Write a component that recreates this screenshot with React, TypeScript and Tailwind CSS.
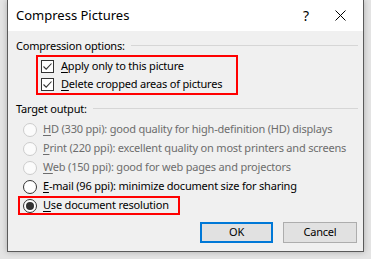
import type { ReactNode } from "react";

const font = { fontFamily: '"Noto Sans", "Open Sans", sans-serif' };

function Acc({ children }: { children: ReactNode }) {
  return <span className="underline underline-offset-2">{children}</span>;
}

function SectionHeader({ label }: { label: string }) {
  return (
    <div className="flex h-[16px] items-center gap-[6px]">
      <span className="leading-none">{label}</span>
      <div className="h-px flex-1 bg-[#d6d6d6]" />
    </div>
  );
}

function CheckBox() {
  return (
    <span className="flex h-[13px] w-[13px] shrink-0 items-center justify-center border border-[#333] bg-white">
      <svg width="11" height="11" viewBox="0 0 11 11">
        <path d="M1.5 5.5 L4.2 8.2 L9.5 2.5" fill="none" stroke="#333" strokeWidth="1.1" />
      </svg>
    </span>
  );
}

function Radio({ checked, disabled }: { checked?: boolean; disabled?: boolean }) {
  return (
    <span
      className={
        disabled
          ? "flex h-[14px] w-[14px] shrink-0 items-center justify-center rounded-full border border-[#cccccc] bg-[#fbfbfb]"
          : "flex h-[14px] w-[14px] shrink-0 items-center justify-center rounded-full border border-[#333] bg-white"
      }
    >
      {checked && <span className="h-[8px] w-[8px] rounded-full bg-[#333]" />}
    </span>
  );
}

function RadioRow({
  children,
  checked,
  disabled,
}: {
  children: ReactNode;
  checked?: boolean;
  disabled?: boolean;
}) {
  return (
    <div className="ml-[7px] flex h-[19px] items-center gap-[6px]">
      <Radio checked={checked} disabled={disabled} />
      <span className={disabled ? "text-[#6d6d6d]" : "text-black"}>{children}</span>
    </div>
  );
}

export default function App() {
  return (
    <div
      className="flex h-[259px] w-[371px] whitespace-nowrap bg-[#e4e4e4] px-[7px] pb-[7px] text-[11px] tracking-[-0.2px] text-black"
      style={font}
    >
      <div className="flex flex-1 flex-col border-x border-b border-[#5a5a5a] bg-[#f0f0f0] shadow-[0_0_6px_rgba(0,0,0,0.25)]">
        <div className="flex h-[31px] shrink-0 items-center bg-white pl-[8px]">
          <span className="text-[13px] leading-none tracking-normal">Compress Pictures</span>
          <span className="ml-auto mr-[26px] text-[14px] leading-none">?</span>
          <svg className="mr-[17px]" width="11" height="11" viewBox="0 0 11 11">
            <path d="M0.5 0.5 L10.5 10.5 M10.5 0.5 L0.5 10.5" stroke="#000" strokeWidth="1" />
          </svg>
        </div>

        <div className="flex flex-1 flex-col pl-[8px] pr-[5px]">
          <div className="mt-[6px]">
            <SectionHeader label="Compression options:" />
          </div>
          <div className="ml-[20px] mt-[2px] flex h-[40px] w-[202px] flex-col border-2 border-[#ff0000] pl-[3px]">
            <div className="flex h-[18px] items-center gap-[7px]">
              <CheckBox />
              <span>
                <Acc>A</Acc>pply only to this picture
              </span>
            </div>
            <div className="flex h-[18px] items-center gap-[7px]">
              <CheckBox />
              <span>
                <Acc>D</Acc>elete cropped areas of pictures
              </span>
            </div>
          </div>

          <div className="mt-[5px]">
            <SectionHeader label="Target output:" />
          </div>
          <div className="mt-[4px] flex flex-col">
            <RadioRow disabled>
              <Acc>H</Acc>D (330 ppi): good quality for high-definition (HD) displays
            </RadioRow>
            <RadioRow disabled>
              <Acc>P</Acc>rint (220 ppi): excellent quality on most printers and screens
            </RadioRow>
            <RadioRow disabled>
              <Acc>W</Acc>eb (150 ppi): good for web pages and projectors
            </RadioRow>
            <RadioRow>
              <Acc>E</Acc>-mail (96 ppi): minimize document size for sharing
            </RadioRow>
            <div className="ml-[2px] flex h-[19px] w-[162px] items-center gap-[6px] border-2 border-[#ff0000] pl-[3px]">
              <Radio checked />
              <span>
                <Acc>U</Acc>se document resolution
              </span>
            </div>
          </div>

          <div className="mt-[7px] flex justify-end gap-[10px] pr-[1px]">
            <button className="flex h-[21px] w-[73px] items-center justify-center border-2 border-[#0078d7] bg-[#e1e1e1]">
              OK
            </button>
            <button className="flex h-[21px] w-[74px] items-center justify-center border border-[#adadad] bg-[#e1e1e1]">
              Cancel
            </button>
          </div>
        </div>
      </div>
    </div>
  );
}
